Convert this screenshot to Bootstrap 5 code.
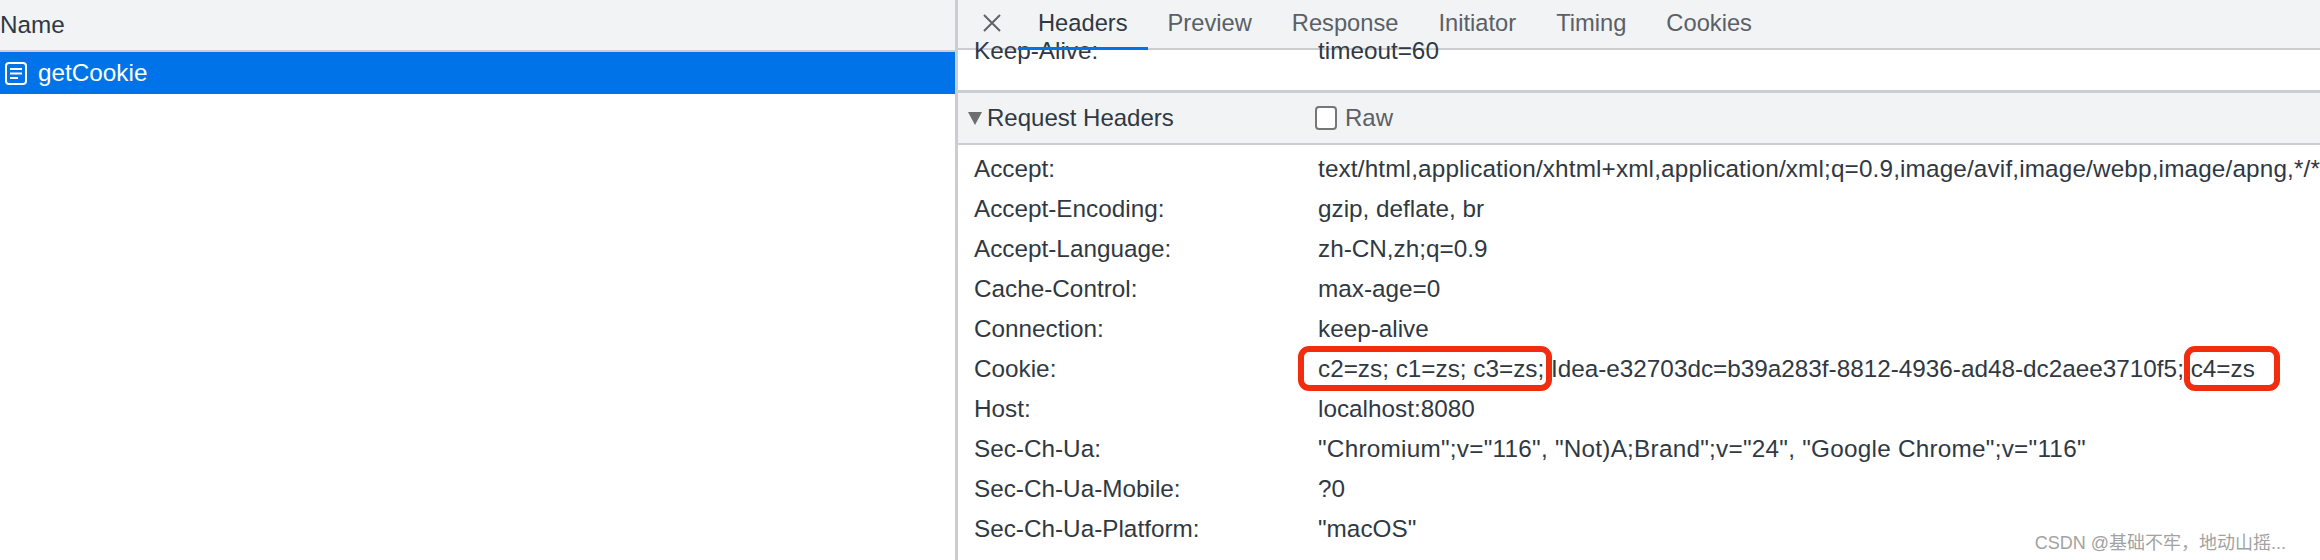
<!DOCTYPE html>
<html lang="en"><head><meta charset="utf-8"><title>getCookie</title>
<link rel="stylesheet" href="https://cdn.jsdelivr.net/npm/bootstrap@5.3.0/dist/css/bootstrap.min.css">
<style>
html,body{height:560px;overflow:hidden;background:#fff}
body{font-family:"Liberation Sans",Arial,sans-serif;font-size:24.3px;color:#303942}
.shell{height:560px;position:relative}
.left-pane{width:955px;flex:none}
.name-head{height:52px;background:#f1f3f4;border-bottom:2px solid #cbcdd1;line-height:50px;color:#303942}
.req-row{height:42px;background:#0073e8;color:#fff;padding-left:5px;gap:11px}
.req-row span{padding-top:1px}
.right-pane{border-left:3px solid #cbcdd1;overflow:hidden;min-width:0}
.tabs-bar{height:50px;background:#f1f3f4;border-bottom:2px solid #cbcdd1;padding-left:25px;flex:none}
.tab-x{width:18px;height:18px;margin-right:17px;margin-bottom:2px}
.tab-item{padding:0 20px;height:48px;line-height:46px;color:#5a6066;position:relative;font-size:23.7px}
.tab-item.on{color:#303942}
.tab-item.on::after{content:"";position:absolute;left:0;right:0;bottom:-2px;height:3px;background:#0073e8}
.clipped{height:40px;margin-top:-19px;flex:none}
.sec-head{height:55px;margin-top:19px;background:#f1f3f4;border-top:3px solid #cbcdd1;border-bottom:2px solid #cbcdd1;padding-left:10px;flex:none;font-size:24px}
.tri{width:0;height:0;border-left:7px solid transparent;border-right:7px solid transparent;border-top:13px solid #6e6e6e;margin-right:5px}
.sec-title{width:328px}
.raw-box{width:22px;height:24px;border:2px solid #767676;border-radius:4px;background:#fff;margin-right:8px}
.raw-text{color:#5a6066}
.hdr-list{padding-top:4px}
.hdr{height:40px;line-height:40px;padding-left:16px;white-space:nowrap;flex:none}
.hdr-k{width:344px;flex:none}
.hdr-v{white-space:nowrap}
.spread-a{letter-spacing:.15px}
.spread-b{letter-spacing:.25px}
.mark-box{position:absolute;top:346px;height:45px;border:6px solid #f22c0e;border-radius:11px}
.mark-a{left:1298px;width:254px}
.mark-b{left:2184px;width:96px}
.wm{position:absolute;right:34px;top:530px;font-size:18px;color:#a2a2a2;font-family:"Liberation Sans","Noto Sans CJK SC",sans-serif;white-space:nowrap}
</style></head>
<body>
<div class="shell d-flex">
  <div class="left-pane">
    <div class="name-head">Name</div>
    <div class="req-row d-flex align-items-center">
      <svg width="22" height="23" viewBox="0 0 22 23" fill="none" stroke="#fff" stroke-width="2"><rect x="1" y="1" width="20" height="21" rx="3"/><path d="M5 7h12M5 11.5h12M5 16h8"/></svg>
      <span>getCookie</span>
    </div>
  </div>
  <div class="right-pane flex-grow-1 d-flex flex-column">
    <div class="tabs-bar d-flex align-items-center">
      <svg class="tab-x" viewBox="0 0 18 18" fill="none" stroke="#5f6368" stroke-width="2"><path d="M1 1l16 16M17 1L1 17"/></svg>
      <div class="tab-item on">Headers</div>
      <div class="tab-item">Preview</div>
      <div class="tab-item">Response</div>
      <div class="tab-item">Initiator</div>
      <div class="tab-item">Timing</div>
      <div class="tab-item">Cookies</div>
    </div>
    <div class="hdr d-flex clipped"><div class="hdr-k">Keep-Alive:</div><div class="hdr-v">timeout=60</div></div>
    <div class="sec-head d-flex align-items-center">
      <span class="tri"></span><span class="sec-title">Request Headers</span>
      <span class="raw-box"></span><span class="raw-text">Raw</span>
    </div>
    <div class="hdr-list">
      <div class="hdr d-flex"><div class="hdr-k">Accept:</div><div class="hdr-v spread-a">text/html,application/xhtml+xml,application/xml;q=0.9,image/avif,image/webp,image/apng,*/*;q=0.8</div></div>
      <div class="hdr d-flex"><div class="hdr-k">Accept-Encoding:</div><div class="hdr-v">gzip, deflate, br</div></div>
      <div class="hdr d-flex"><div class="hdr-k">Accept-Language:</div><div class="hdr-v">zh-CN,zh;q=0.9</div></div>
      <div class="hdr d-flex"><div class="hdr-k">Cache-Control:</div><div class="hdr-v">max-age=0</div></div>
      <div class="hdr d-flex"><div class="hdr-k">Connection:</div><div class="hdr-v">keep-alive</div></div>
      <div class="hdr d-flex"><div class="hdr-k">Cookie:</div><div class="hdr-v">c2=zs; c1=zs; c3=zs; Idea-e32703dc=b39a283f-8812-4936-ad48-dc2aee3710f5; c4=zs</div></div>
      <div class="hdr d-flex"><div class="hdr-k">Host:</div><div class="hdr-v">localhost:8080</div></div>
      <div class="hdr d-flex"><div class="hdr-k">Sec-Ch-Ua:</div><div class="hdr-v spread-b">"Chromium";v="116", "Not)A;Brand";v="24", "Google Chrome";v="116"</div></div>
      <div class="hdr d-flex"><div class="hdr-k">Sec-Ch-Ua-Mobile:</div><div class="hdr-v">?0</div></div>
      <div class="hdr d-flex"><div class="hdr-k">Sec-Ch-Ua-Platform:</div><div class="hdr-v">"macOS"</div></div>
      <div class="hdr d-flex"><div class="hdr-k">Sec-Fetch-Dest:</div><div class="hdr-v">document</div></div>
    </div>
  </div>
  <div class="mark-box mark-a"></div>
  <div class="mark-box mark-b"></div>
  <div class="wm">CSDN @基础不牢，地动山摇...</div>
</div>
<script src="https://cdn.jsdelivr.net/npm/bootstrap@5.3.0/dist/js/bootstrap.bundle.min.js"></script>
</body></html>
